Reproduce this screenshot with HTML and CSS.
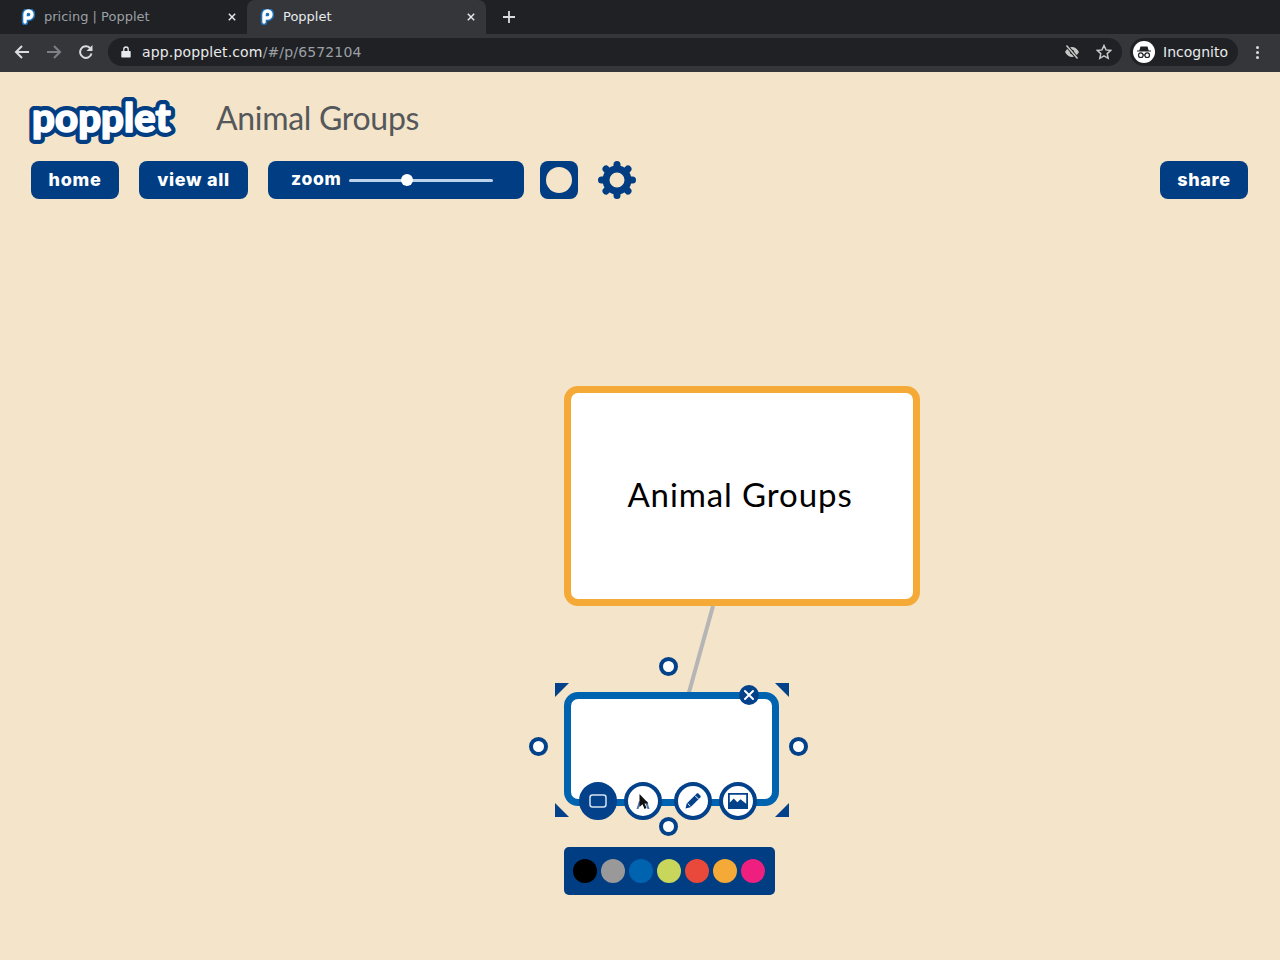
FILE: index.html
```html
<!DOCTYPE html>
<html lang="en">
<head>
<meta charset="utf-8">
<title>Popplet</title>
<link rel="stylesheet" href="styles.css">
</head>
<body>
<div class="tabstrip">
  <div class="tab">
    <svg class="favicon" viewBox="0 0 14 16"><path class="fav-out" d="M4 13V5.500a3.500 3.500 0 1 1 3.500 3.500H5"/><path class="fav-in" d="M4 13V5.500a3.500 3.500 0 1 1 3.500 3.500H5"/><circle cx="7.500" cy="5.500" r="1.300" fill="#1f6fb5"/></svg>
    <span class="tab-title">pricing | Popplet</span>
    <svg class="tab-x" viewBox="0 0 10 10"><path d="M1 1l8 8M9 1l-8 8"/></svg>
  </div>
  <div class="tab tab-active">
    <svg class="favicon" viewBox="0 0 14 16"><path class="fav-out" d="M4 13V5.500a3.500 3.500 0 1 1 3.500 3.500H5"/><path class="fav-in" d="M4 13V5.500a3.500 3.500 0 1 1 3.500 3.500H5"/><circle cx="7.500" cy="5.500" r="1.300" fill="#1f6fb5"/></svg>
    <span class="tab-title">Popplet</span>
    <svg class="tab-x" viewBox="0 0 10 10"><path d="M1 1l8 8M9 1l-8 8"/></svg>
  </div>
  <svg class="new-tab" viewBox="0 0 12 12"><path d="M6 0v12M0 6h12"/></svg>
</div>
<div class="addressbar">
  <svg class="nav-icon" viewBox="0 0 16 16"><path d="M15 8H2M8 2L2 8l6 6"/></svg>
  <svg class="nav-icon nav-dim" viewBox="0 0 16 16"><path d="M1 8h13M8 2l6 6-6 6"/></svg>
  <svg class="nav-icon" viewBox="0 0 16 16"><path d="M13.500 9.500A5.800 5.800 0 1 1 12 4"/><path class="solid" d="M14.500 1v6h-6z"/></svg>
  <div class="omnibox">
    <svg class="lock" viewBox="0 0 10 12"><path d="M1 5h8a.7.7 0 0 1 .7.700v5a.7.7 0 0 1-.7.700H1a.7.7 0 0 1-.7-.700v-5A.7.7 0 0 1 1 5z"/><path class="ring" d="M2.800 5V3.200a2.200 2.200 0 0 1 4.400 0V5"/></svg>
    <span class="url">app.popplet.com<span class="url-dim">/#/p/6572104</span></span>
    <svg class="omni-eye" viewBox="0 0 16 16"><path class="solid" d="M1 8c2-3.500 4.300-5 7-5s5 1.500 7 5c-2 3.500-4.300 5-7 5s-5-1.500-7-5z"/><circle cx="8" cy="8" r="2.200" fill="#202124"/><path d="M3 2l10 12" stroke="#202124" stroke-width="3.400"/><path d="M2.500 1.500l11 13" stroke="#c4c7c5" stroke-width="1.500"/></svg>
    <svg class="omni-star" viewBox="0 0 16 16"><path d="M8 1.500l2 4.400 4.800.5-3.600 3.200 1 4.700L8 11.900l-4.200 2.400 1-4.700L1.200 6.400 6 5.900z"/></svg>
  </div>
  <div class="profile">
    <svg class="avatar" viewBox="0 0 22 22"><circle cx="11" cy="11" r="11" fill="#fff"/><path d="M7.500 5.500h7l1.200 4H18v1H4v-1h2.300z" fill="#202124"/><circle cx="7.800" cy="14.200" r="2.300" fill="none" stroke="#202124" stroke-width="1.200"/><circle cx="14.200" cy="14.200" r="2.300" fill="none" stroke="#202124" stroke-width="1.200"/><path d="M10 14h2" stroke="#202124"/></svg>
    <span class="profile-name">Incognito</span>
  </div>
  <div class="kebab"><i></i><i></i><i></i></div>
</div>

<main class="app">
  <header class="brand-row">
    <svg class="logo" viewBox="0 0 186 62"><use href="#logo-word" class="logo-back"/><text id="logo-word" class="logo-word" x="2" y="46">popplet</text></svg>
    <h1 class="board-title">Animal Groups</h1>
  </header>
  <nav class="toolbar">
    <a class="btn btn-home">home</a>
    <a class="btn btn-viewall">view all</a>
    <div class="btn zoom">
      <span class="zoom-label">zoom</span>
      <span class="zoom-track"><span class="zoom-thumb"></span></span>
    </div>
    <div class="btn shape-btn"><span class="shape-dot"></span></div>
    <svg class="gear" viewBox="-19 -19 38 38">
      <circle r="11" class="gear-ring"/>
      <path class="gear-teeth" d="M0-12.500V-15.500M8.800-8.800L11-11M12.500 0H15.500M8.800 8.800L11 11M0 12.500V15.500M-8.800 8.800L-11 11M-12.500 0H-15.500M-8.800-8.800L-11-11"/>
    </svg>
    <a class="btn btn-share">share</a>
  </nav>

  <svg class="connector" viewBox="0 0 40 100"><path d="M33 0L8 90"/></svg>

  <div class="node node-root"><span class="node-text">Animal Groups</span></div>

  <div class="node node-new"></div>

  <span class="corner corner-tl"></span>
  <span class="corner corner-tr"></span>
  <span class="corner corner-bl"></span>
  <span class="corner corner-br"></span>

  <span class="handle handle-top"></span>
  <span class="handle handle-left"></span>
  <span class="handle handle-right"></span>
  <span class="handle handle-bottom"></span>

  <svg class="close" viewBox="0 0 20 20"><circle cx="10" cy="10" r="10"/><path d="M6 6l8 8M14 6l-8 8"/></svg>

  <div class="tools">
    <span class="tool tool-shape"><svg class="tool-svg" viewBox="0 0 20 16"><rect x="2" y="2" width="16" height="12" rx="2.500" fill="none" stroke="#d6e2ef" stroke-width="1.500"/></svg></span>
    <span class="tool tool-link"><svg class="tool-svg" viewBox="0 0 20 20"><path d="M3.500 18l2.500-8 2 1-2.500 7zM16.500 18l-2.500-8-2 1 2.500 7z" fill="#003d82" opacity=".7"/><path d="M6.500 3v13l3-2.700 2 4.700 2-1-2-4.400h4z" fill="#111"/></svg></span>
    <span class="tool tool-pencil"><svg class="tool-svg" viewBox="0 0 20 20"><path d="M2.500 17.500l1.200-5L13.500 2.700c.6-.6 1.500-.6 2.100 0l1.700 1.700c.6.600.6 1.500 0 2.100L7.500 16.300z" fill="#03428a"/><path d="M12 4.600l3.400 3.400" stroke="#fff" stroke-width="1"/><path d="M4.700 12.500l2.800 2.800" stroke="#fff" stroke-width="1"/></svg></span>
    <span class="tool tool-image"><svg class="tool-svg" viewBox="0 0 20 16"><path fill-rule="evenodd" d="M0 0h20v16H0zM1.800 1.800v7.600l4-3.800 3.500 3.600 3.200-3 5.700 4.600V1.800z" fill="#03428a"/></svg></span>
  </div>

  <div class="palette">
    <span class="swatch swatch-black"></span>
    <span class="swatch swatch-gray"></span>
    <span class="swatch swatch-blue"></span>
    <span class="swatch swatch-green"></span>
    <span class="swatch swatch-red"></span>
    <span class="swatch swatch-orange"></span>
    <span class="swatch swatch-pink"></span>
  </div>
</main>
</body>
</html>
```
FILE: styles.css
```css
* { box-sizing: border-box; }
html, body { margin: 0; padding: 0; height: 100%; overflow: hidden; }
body {
  width: 1280px;
  height: 960px;
  background: #f4e4c9;
  font-family: "DejaVu Sans", sans-serif;
  display: flex;
  flex-direction: column;
}

/* browser chrome */
.tabstrip {
  height: 34px;
  background: #202124;
  display: flex;
  align-items: center;
  padding-left: 8px;
  flex: none;
}
.tab {
  width: 239px;
  height: 34px;
  display: flex;
  align-items: center;
  padding: 0 9px 0 13px;
  color: #9aa0a6;
  font-size: 13px;
}
.tab-active {
  background: #35363a;
  color: #e8eaed;
  border-radius: 8px 8px 0 0;
}
.favicon { width: 14px; height: 16px; flex: none; margin-right: 9px; }
.fav-out { fill: none; stroke: #1f6fb5; stroke-width: 6.500; stroke-linecap: round; }
.fav-in { fill: none; stroke: #fff; stroke-width: 3.400; stroke-linecap: round; }
.tab-title { flex: 1; white-space: nowrap; margin-top: -2px; }
.tab-x { width: 8px; height: 8px; flex: none; margin-right: 2px; margin-top: -1px; }
.tab-x path { stroke: #e8eaed; stroke-width: 1.800; fill: none; }
.new-tab { width: 12px; height: 12px; margin-left: 17px; margin-top: -1px; }
.new-tab path { stroke: #dadce0; stroke-width: 1.800; fill: none; }

.addressbar {
  height: 38px;
  background: #35363a;
  display: flex;
  align-items: center;
  flex: none;
  padding: 0 0 2px 14px;
}
.nav-icon { width: 16px; height: 16px; margin-right: 16px; flex: none; }
.nav-icon path { fill: none; stroke: #dadce0; stroke-width: 2; }
.nav-icon path.solid { fill: #dadce0; stroke: none; }
.nav-dim path { stroke: #7d8084; }
.omnibox {
  width: 1014px;
  height: 28px;
  margin-left: -2px;
  background: #202124;
  border-radius: 14px;
  display: flex;
  align-items: center;
  padding-left: 13px;
  flex: none;
}
.lock { width: 10px; height: 12px; flex: none; margin-right: 11px; }
.lock path { fill: #e8eaed; }
.lock path.ring { fill: none; stroke: #e8eaed; stroke-width: 1.300; }
.url { color: #e8eaed; font-size: 14px; letter-spacing: .15px; flex: 1; white-space: nowrap; margin-top: -1px; }
.url-dim { color: #9aa0a6; }
.omni-eye { width: 16px; height: 16px; flex: none; margin-right: 16px; }
.omni-eye path.solid { fill: #c4c7c5; }
.omni-star { width: 16px; height: 16px; flex: none; margin-right: 10px; }
.omni-star path { fill: none; stroke: #c4c7c5; stroke-width: 1.500; }
.profile {
  width: 108px;
  height: 28px;
  margin-left: 8px;
  border-radius: 14px;
  background: #202124;
  display: flex;
  align-items: center;
  padding-left: 3px;
  flex: none;
}
.avatar { width: 22px; height: 22px; margin-right: 8px; flex: none; }
.profile-name { color: #e8eaed; font-size: 14px; margin-top: -1px; }
.kebab {
  margin-left: 18px;
  display: flex;
  flex-direction: column;
  gap: 2px;
}
.kebab i { display: block; width: 3px; height: 3px; border-radius: 50%; background: #dadce0; }

/* app */
.app {
  position: relative;
  flex: 1;
  background: #f4e4c9;
}
.brand-row {
  display: flex;
  align-items: flex-start;
  height: 89px;
  padding: 14px 0 0 30px;
}
.logo { width: 186px; height: 62px; flex: none; overflow: visible; }
.logo-back { --logo-stroke: #003d82; --logo-width: 10px; }
.logo-word {
  font-family: "Lato", sans-serif;
  font-weight: 900;
  font-size: 40px;
  letter-spacing: .1px;
  fill: #fff;
  stroke: var(--logo-stroke, #fff);
  stroke-width: var(--logo-width, 1.600px);
  stroke-linejoin: round;
  stroke-linecap: round;
}
.board-title {
  margin: 12px 0 0;
  font-family: "Lato", sans-serif;
  font-weight: 400;
  font-size: 32px;
  line-height: 40px;
  color: #54585b;
  letter-spacing: -.3px;
}
.toolbar {
  display: flex;
  align-items: center;
  height: 38px;
  padding: 0 32px 0 31px;
}
.btn {
  height: 38px;
  background: #003d82;
  color: #fff;
  border-radius: 8px;
  display: flex;
  align-items: center;
  justify-content: center;
  font-family: "Inter", sans-serif;
  font-weight: 800;
  font-size: 18px;
  letter-spacing: .7px;
  padding-bottom: 2px;
}
.btn-home { width: 88px; margin-right: 20px; }
.btn-viewall { width: 109px; margin-right: 20px; }
.zoom { width: 256px; justify-content: flex-start; padding: 0 0 0 23px; margin-right: 16px; }
.zoom-label { font-size: 17.500px; margin-top: -4px; width: 58px; flex: none; }
.zoom-track {
  position: relative;
  width: 144px;
  height: 3px;
  background: #bcd2ea;
  border-radius: 2px;
}
.zoom-thumb {
  position: absolute;
  left: 52px;
  top: -5px;
  width: 12px;
  height: 12px;
  border-radius: 50%;
  background: #fff;
}
.shape-btn { width: 38px; margin-right: 20px; padding: 0; }
.shape-dot { width: 26px; height: 26px; border-radius: 50%; background: #f4e4c9; }
.gear { width: 38px; height: 38px; flex: none; }
.gear-ring { fill: none; stroke: #003d82; stroke-width: 7; }
.gear-teeth { fill: none; stroke: #003d82; stroke-width: 7; stroke-linecap: round; }
.btn-share { width: 88px; margin-left: auto; }

/* canvas: free placement */
.node {
  position: absolute;
  background: #fff;
  border-radius: 14px;
}
.node-root {
  left: 564px;
  top: 314px;
  width: 356px;
  height: 220px;
  border: 7px solid #f5a936;
  display: flex;
  align-items: center;
  justify-content: center;
}
.node-text {
  font-family: "Lato", sans-serif;
  font-size: 33px;
  color: #000;
  letter-spacing: .9px;
  margin-left: -4px;
  margin-top: -5px;
}
.node-new {
  left: 564px;
  top: 620px;
  width: 215px;
  height: 114px;
  border: 7px solid #0063b0;
}
.connector {
  position: absolute;
  left: 680px;
  top: 534px;
  width: 40px;
  height: 100px;
}
.connector path { stroke: #b5b5b5; stroke-width: 4; fill: none; }

.corner { position: absolute; width: 14px; height: 14px; background: #03428a; }
.corner-tl { left: 555px; top: 611px; clip-path: polygon(0 0, 100% 0, 0 100%); }
.corner-tr { left: 775px; top: 611px; clip-path: polygon(0 0, 100% 0, 100% 100%); }
.corner-bl { left: 555px; top: 731px; clip-path: polygon(0 0, 100% 100%, 0 100%); }
.corner-br { left: 775px; top: 731px; clip-path: polygon(100% 0, 100% 100%, 0 100%); }

.handle {
  position: absolute;
  width: 19px;
  height: 19px;
  border-radius: 50%;
  background: #fff;
  border: 4px solid #03428a;
}
.handle-top { left: 659px; top: 585px; }
.handle-left { left: 529px; top: 665px; }
.handle-right { left: 789px; top: 665px; }
.handle-bottom { left: 659px; top: 745px; }

.close { position: absolute; left: 739px; top: 613px; width: 20px; height: 20px; }
.close circle { fill: #03428a; }
.close path { stroke: #fff; stroke-width: 2; stroke-linecap: round; fill: none; }

.tools { position: absolute; left: 579px; top: 710px; display: flex; }
.tool {
  width: 38px;
  height: 38px;
  border-radius: 50%;
  background: #fff;
  border: 4px solid #03428a;
  display: flex;
  align-items: center;
  justify-content: center;
}
.tool-shape { background: #03428a; margin-right: 7px; }
.tool-link { margin-right: 12px; }
.tool-pencil { margin-right: 7px; }
.tool-svg { width: 20px; height: 20px; }

.palette {
  position: absolute;
  left: 564px;
  top: 775px;
  width: 211px;
  height: 48px;
  background: #003d82;
  border-radius: 5px;
  display: flex;
  align-items: center;
  padding-left: 9px;
  gap: 4px;
}
.swatch { width: 24px; height: 24px; border-radius: 50%; }
.swatch-black { background: #000; }
.swatch-gray { background: #999; }
.swatch-blue { background: #0063b0; }
.swatch-green { background: #c8d65b; }
.swatch-red { background: #e8493a; }
.swatch-orange { background: #f5a936; }
.swatch-pink { background: #ee1f7f; }
```
